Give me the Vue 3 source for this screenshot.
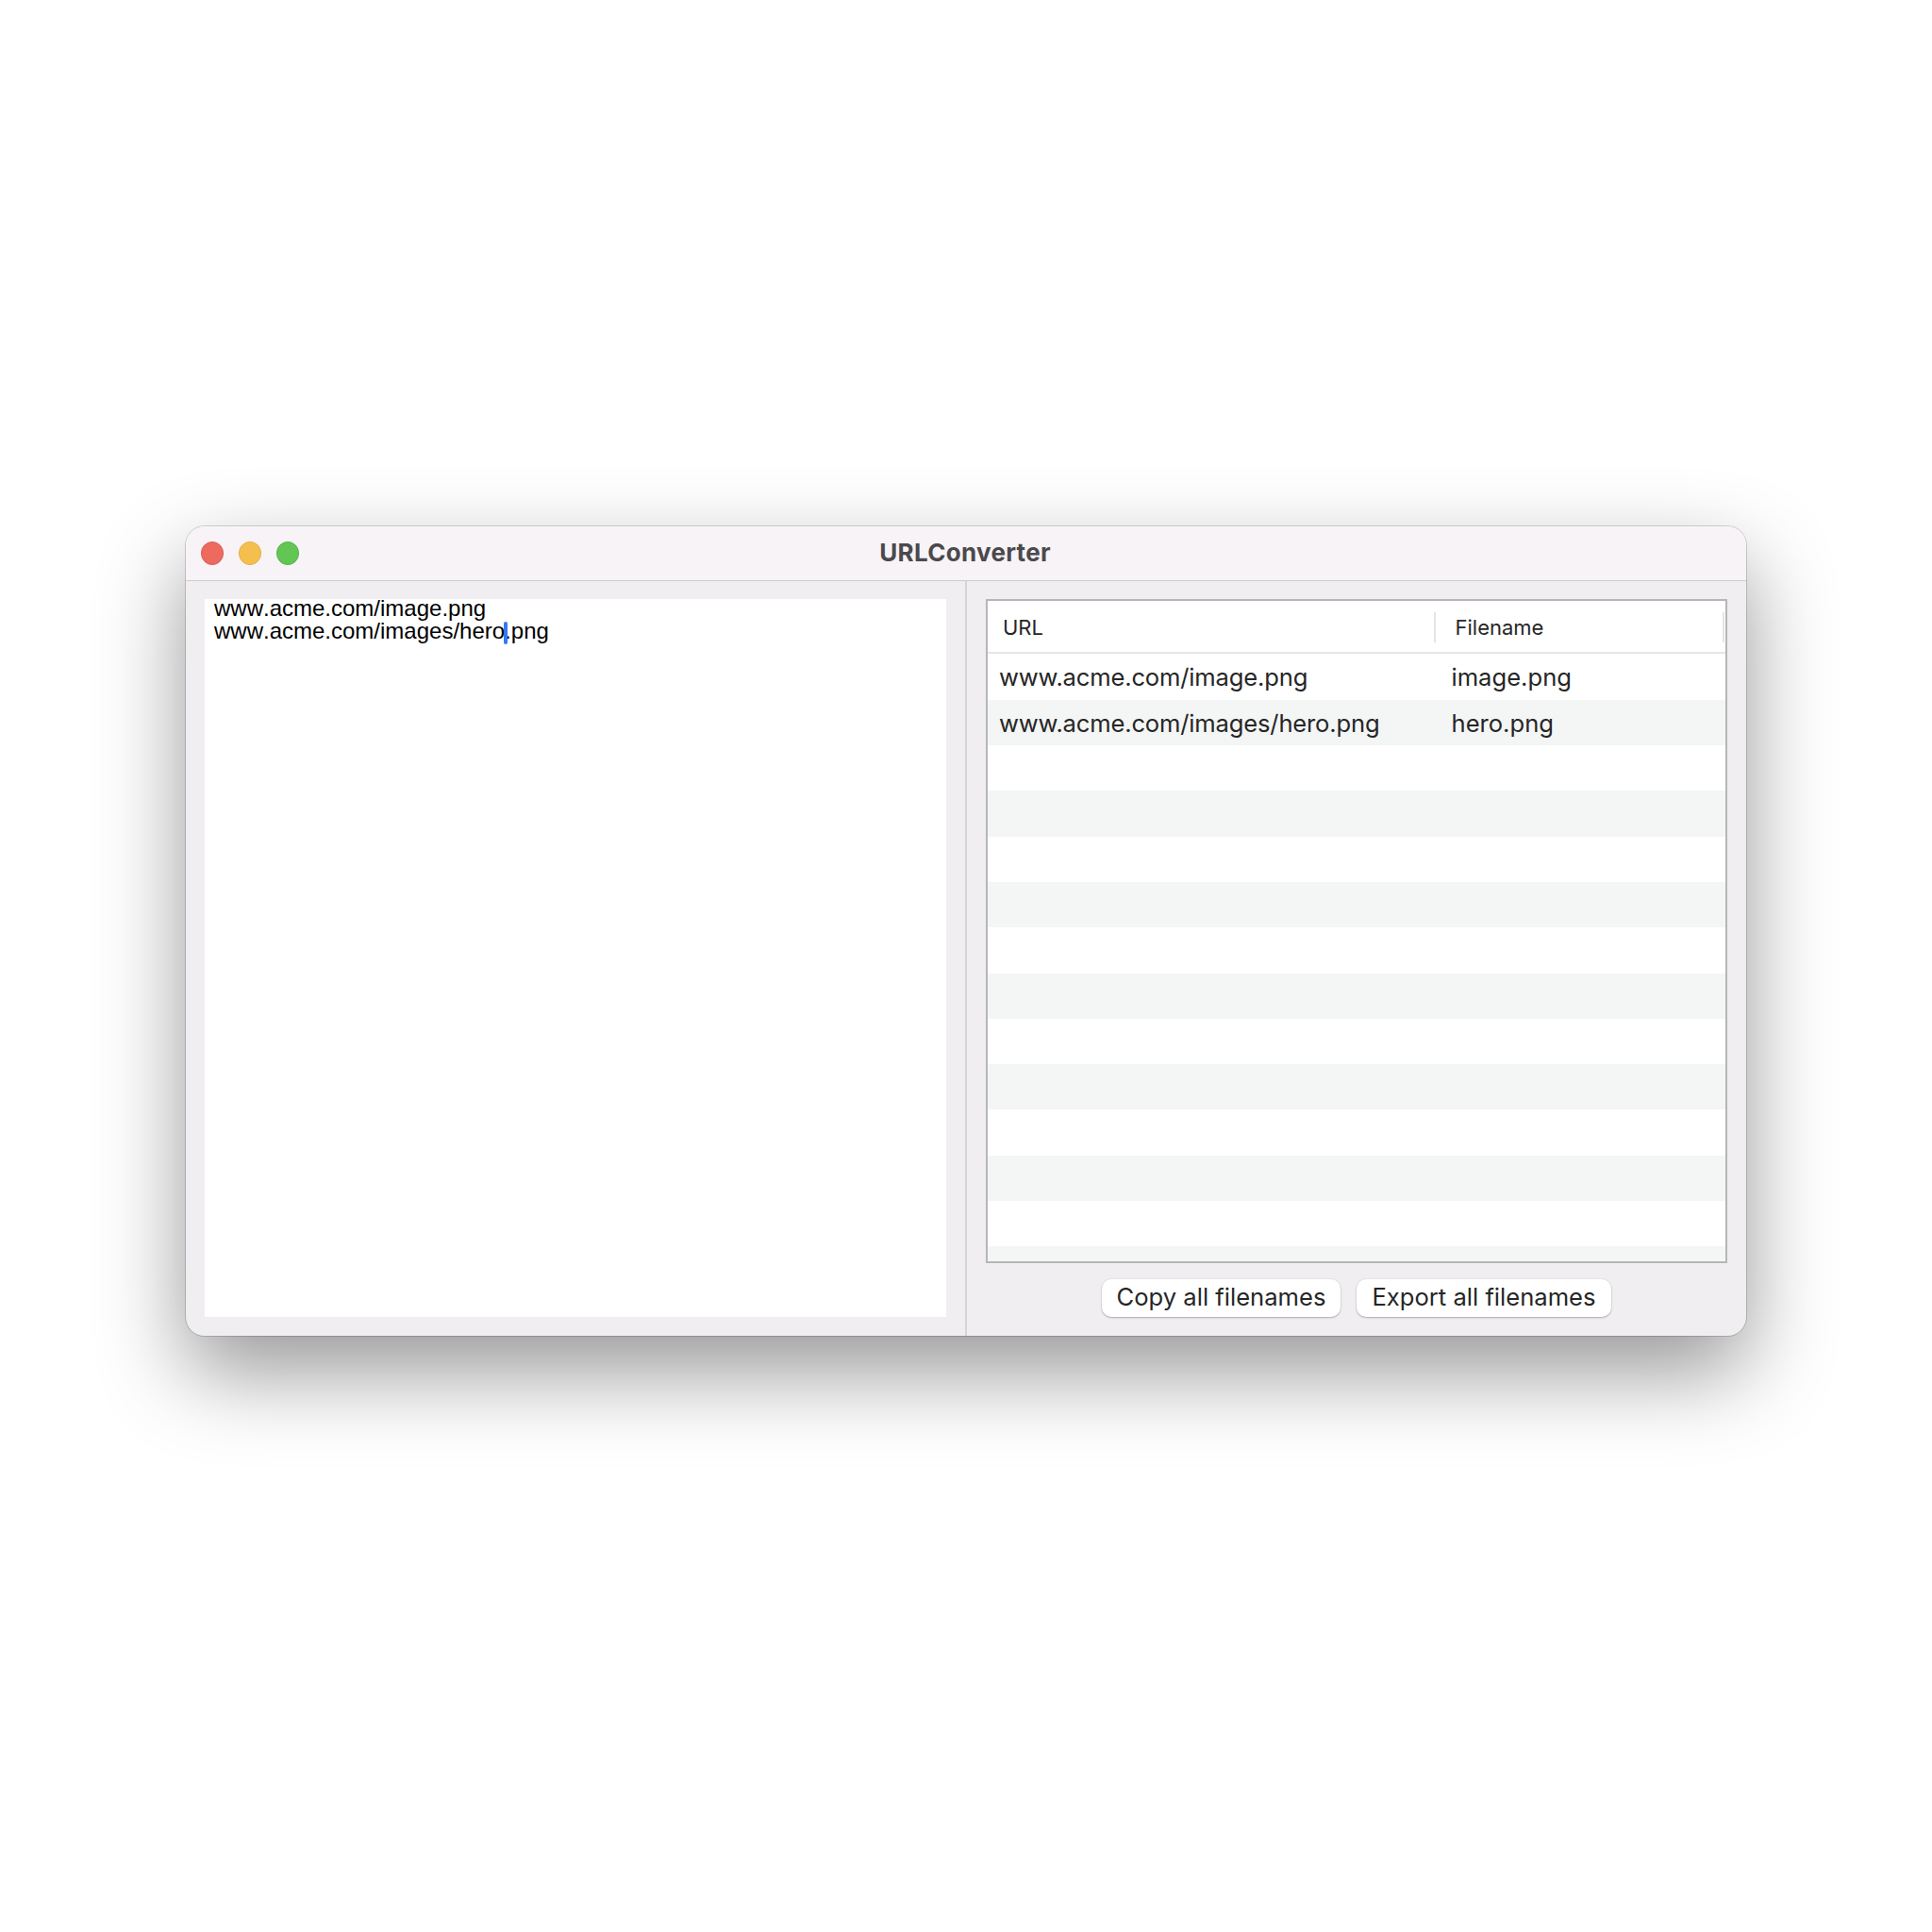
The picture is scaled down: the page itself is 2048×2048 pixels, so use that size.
<script setup>
const lines = [
  { before: 'www.acme.com/image.png' },
  { before: 'www.acme.com/images/hero', caret: true, after: '.png' },
]
const rows = [
  { url: 'www.acme.com/image.png', filename: 'image.png' },
  { url: 'www.acme.com/images/hero.png', filename: 'hero.png' },
  ...Array.from({ length: 12 }, () => ({ url: '', filename: '' })),
]
</script>

<template>
  <main class="desktop">
    <section class="window">
      <header class="titlebar">
        <div class="lights">
          <span class="light close"></span>
          <span class="light minimise"></span>
          <span class="light maximise"></span>
        </div>
        <h1 class="title">URLConverter</h1>
        <div class="balance"></div>
      </header>
      <div class="split">
        <div class="pane">
          <div class="editor">
            <div v-for="line in lines" :key="line.before" class="line">{{ line.before }}<span v-if="line.caret" class="caret"></span>{{ line.after }}</div>
          </div>
        </div>
        <div class="divider"></div>
        <div class="pane right">
          <div class="table">
            <div class="thead">
              <div class="th url"><span>URL</span><i class="sep"></i></div>
              <div class="th name"><span>Filename</span><i class="sep"></i></div>
            </div>
            <div class="tbody">
              <div v-for="(row, i) in rows" :key="i" class="row">
                <div class="td url">{{ row.url }}</div>
                <div class="td">{{ row.filename }}</div>
              </div>
            </div>
          </div>
          <div class="actions">
            <button class="btn copy">Copy all filenames</button>
            <button class="btn export">Export all filenames</button>
          </div>
        </div>
      </div>
    </section>
  </main>
</template>

<style>
body {
  margin: 0;
  background: #fff;
}
</style>

<style scoped>
.desktop {
  box-sizing: border-box;
  width: 2048px;
  height: 2048px;
  padding: 558px 197px 0;
  overflow: hidden;
  font-family: Inter, sans-serif;
  color: #262626;
}
.window {
  display: flex;
  flex-direction: column;
  width: 1654px;
  height: 858px;
  border-radius: 20px;
  overflow: hidden;
  background: #f0eef1;
  box-shadow: 0 0 0 1px rgba(0, 0, 0, 0.16), 0 38px 92px rgba(0, 0, 0, 0.41);
}
.titlebar {
  display: flex;
  align-items: center;
  box-sizing: border-box;
  height: 58px;
  padding: 0 15.5px;
  background: #f7f3f7;
  border-bottom: 1px solid #cfccd0;
  box-shadow: inset 0 1px 0 #fbf9fb;
}
.lights {
  display: flex;
  gap: 16px;
  width: 110px;
}
.light {
  box-sizing: border-box;
  width: 24.3px;
  height: 24.3px;
  border-radius: 50%;
}
.close { background: #ec6a5e; border: 1px solid #dd6057; }
.minimise { background: #f5bf4f; border: 1px solid #e3af45; }
.maximise { background: #62c554; border: 1px solid #57b54a; }
.title {
  flex: 1;
  margin: 0;
  padding: 0 2px 2px 0;
  text-align: center;
  font-size: 26px;
  line-height: 32px;
  font-weight: 700;
  letter-spacing: 0.3px;
  color: #4b494c;
}
.balance { width: 110px; }
.split {
  flex: 1;
  display: flex;
  min-height: 0;
}
.pane {
  flex: 1;
  display: flex;
  flex-direction: column;
  padding: 19px 20px 20px;
  min-width: 0;
}
.divider {
  width: 2px;
  background: #d7d5d8;
}
.editor {
  flex: 1;
  box-sizing: border-box;
  padding: 0 10px;
  background: #fff;
  font: 24px/24px "Liberation Sans", sans-serif;
  font-kerning: none;
  color: #000;
}
.line {
  height: 24px;
  line-height: 19px;
  white-space: pre;
}
.caret {
  position: relative;
  display: inline-block;
  width: 4px;
  height: 24px;
  margin: -3px -3px 0 -1px;
  border-radius: 2px;
  background: #3478f6;
  vertical-align: -6px;
}
.table {
  box-sizing: border-box;
  height: 704.5px;
  border: 2px solid #b6b5b7;
  background: #fff;
  overflow: hidden;
}
.thead {
  display: flex;
  box-sizing: border-box;
  height: 56px;
  margin-bottom: 0.35px;
  padding-top: 1px;
  border-bottom: 2px solid #e5e5e5;
}
.th {
  display: flex;
  align-items: center;
  justify-content: space-between;
  box-sizing: border-box;
  font-size: 22px;
  line-height: 28px;
}
.th span { padding-top: 1px; }
.th.url { width: 475px; padding-left: 16px; }
.th.name { flex: 1; padding: 0 1px 0 20.5px; }
.sep {
  width: 2px;
  height: 32px;
  background: #e4e4e4;
}
.row {
  display: flex;
  height: 48.32px;
  font-size: 25.6px;
  line-height: 49px;
}
.row:nth-child(even) { background: #f4f5f5; }
.td { white-space: nowrap; }
.td.url {
  box-sizing: border-box;
  width: 491.5px;
  padding-left: 12px;
  letter-spacing: -0.18px;
}
.actions {
  display: flex;
  justify-content: center;
  gap: 17px;
  padding-top: 17px;
}
.btn {
  height: 40px;
  padding: 0 0 2px;
  border: 0;
  border-radius: 10px;
  background: #fff;
  box-shadow: 0 0 0 1px rgba(0, 0, 0, 0.03), 0 1px 2px rgba(0, 0, 0, 0.26);
  font: 25.6px/38px Inter, sans-serif;
  color: #262626;
  white-space: nowrap;
}
.copy { width: 253px; }
.export { width: 270px; }
</style>
